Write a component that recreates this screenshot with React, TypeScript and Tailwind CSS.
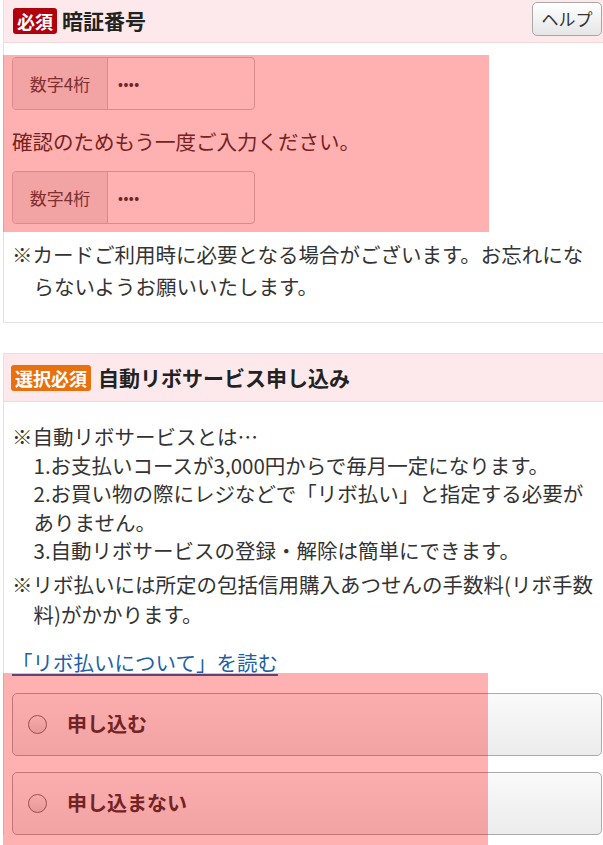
import React from 'react';

const FONT = "font-['Noto_Sans_CJK_JP','Noto_Sans',sans-serif]";

function PinInput() {
  return (
    <div className="flex h-[53px] w-[243px] rounded-[4px] border border-[#c8c8c8] bg-white overflow-hidden">
      <div className="flex w-[95px] items-center justify-center border-r border-[#c8c8c8] bg-[#ececec] text-[17px] text-[#444]">
        数字4桁
      </div>
      <div className="flex items-center pl-[10px] text-[13px] font-bold tracking-[0.5px] text-[#333]">••••</div>
    </div>
  );
}

function Radio({ label }: { label: string }) {
  return (
    <label className="flex h-[63px] items-center rounded-[5px] border border-[#aaaaaa] bg-gradient-to-b from-[#fafafa] to-[#ececec] pl-[15px]">
      <span className="h-[19px] w-[19px] shrink-0 rounded-full border border-[#6f6f6f] bg-gradient-to-b from-[#f4f4f4] to-[#dcdcdc]" />
      <span className="ml-[20px] text-[20px] font-bold text-[#333]">{label}</span>
    </label>
  );
}

export default function App() {
  return (
    <div className={`relative h-[845px] w-[603px] overflow-hidden bg-white text-[#333] ${FONT}`}>
      {/* 暗証番号 */}
      <section className="ml-[3px] border-b border-l border-[#e2e2e2]">
        <div className="flex h-[43px] items-center border-b border-[#f1d9dc] bg-[#fde9eb] pl-[9px] pr-[1px]">
          <span className="flex h-[26px] items-center rounded-[3px] bg-[#b0000b] px-[4px] text-[18px] font-bold leading-none text-white">
            必須
          </span>
          <h2 className="ml-[5px] text-[21px] font-bold text-[#222]">暗証番号</h2>
          <button className="ml-auto mb-[4px] h-[34px] w-[70px] rounded-[5px] border border-[#a8a8a8] bg-gradient-to-b from-white to-[#e6e6e6] text-[17px] text-[#333]">
            ヘルプ
          </button>
        </div>
        <div className="relative px-[8px] pb-[20px] pt-[14px] text-[20.5px]">
          <PinInput />
          <p className="mt-[15px] leading-[32px]">確認のためもう一度ご入力ください。</p>
          <div className="mt-[14px]">
            <PinInput />
          </div>
          <p className="mt-[14px] pl-[1.05em] -indent-[1.05em] leading-[32px]">
            ※カードご利用時に必要となる場合がございます。お忘れにならないようお願いいたします。
          </p>
          <div className="pointer-events-none absolute left-[-1px] top-[12px] h-[177px] w-[486px] bg-[rgba(255,0,0,0.31)]" />
        </div>
      </section>

      {/* 自動リボサービス申し込み */}
      <section className="relative ml-[3px] mt-[30px] border-l border-t border-[#e2e2e2]">
        <div className="flex h-[48px] items-center border-b border-[#f1d9dc] bg-[#fde9eb] pl-[7px]">
          <span className="flex h-[26px] items-center rounded-[3px] bg-[#e8700f] px-[4px] text-[18px] font-bold leading-none text-white">
            選択必須
          </span>
          <h2 className="ml-[7px] text-[21px] font-bold text-[#222]">自動リボサービス申し込み</h2>
        </div>
        <div className="px-[8px] pt-[20px] text-[20.5px]">
          <div className="leading-[28.5px]">
            <p>※自動リボサービスとは…</p>
            <ol className="pl-[1.05em]">
              <li>1.お支払いコースが3,000円からで毎月一定になります。</li>
              <li>2.お買い物の際にレジなどで「リボ払い」と指定する必要がありません。</li>
              <li>3.自動リボサービスの登録・解除は簡単にできます。</li>
            </ol>
          </div>
          <p className="mt-[4px] pl-[1.05em] -indent-[1.05em] leading-[30px]">
            ※リボ払いには所定の包括信用購入あつせんの手数料(リボ手数料)がかかります。
          </p>
          <a href="#" className="mt-[18px] block leading-[30px] text-[#1d5fa6] underline underline-offset-[3px]">
            「リボ払いについて」を読む
          </a>
          <div className="mr-[-7px] mt-[16px] flex flex-col gap-[16px]">
            <Radio label="申し込む" />
            <Radio label="申し込まない" />
          </div>
        </div>
      </section>
      <div className="pointer-events-none absolute left-[3px] top-[673px] h-[172px] w-[485px] bg-[rgba(255,0,0,0.31)]" />
    </div>
  );
}
